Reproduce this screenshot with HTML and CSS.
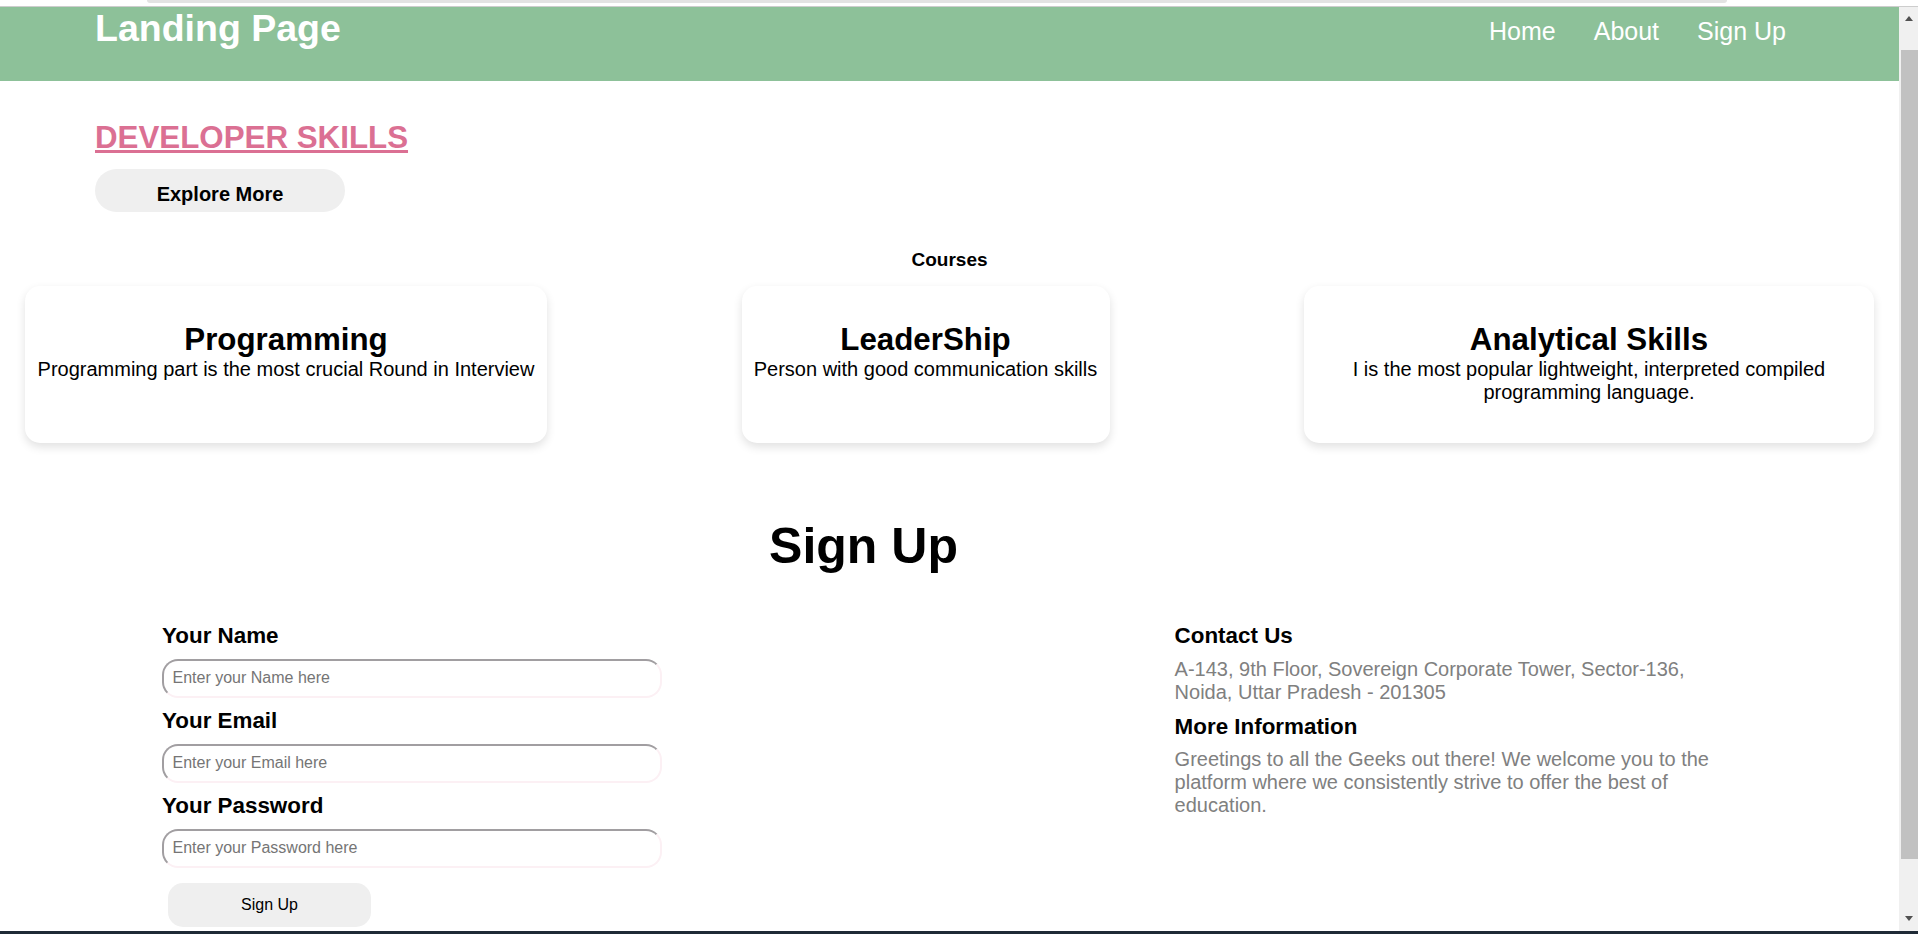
FILE: index.html
```html
<!DOCTYPE html>
<html lang="en">
<head>
<meta charset="utf-8">
<title>Landing Page</title>
<link rel="stylesheet" href="styles.css">
</head>
<body>
<div class="chrome-top"><div class="chrome-tab"></div></div>
<div class="window">
  <div class="page">
    <header class="site-header">
      <h1 class="logo">Landing Page</h1>
      <nav class="nav">
        <a href="#">Home</a>
        <a href="#">About</a>
        <a href="#">Sign Up</a>
      </nav>
    </header>

    <section class="hero">
      <h2 class="hero-title"><a href="#">DEVELOPER SKILLS</a></h2>
      <button class="explore-btn" type="button">Explore More</button>
    </section>

    <section class="courses">
      <h3 class="courses-title">Courses</h3>
      <div class="course-list">
        <div class="card card-programming">
          <h3 class="card-title">Programming</h3>
          <p class="card-text">Programming part is the most crucial Round in Interview</p>
        </div>
        <div class="card card-leadership">
          <h3 class="card-title">LeaderShip</h3>
          <p class="card-text">Person with good communication skills</p>
        </div>
        <div class="card card-analytical">
          <h3 class="card-title">Analytical Skills</h3>
          <p class="card-text">I is the most popular lightweight, interpreted compiled programming language.</p>
        </div>
      </div>
    </section>

    <section class="signup">
      <h2 class="signup-title">Sign Up</h2>
      <div class="signup-body">
        <form class="signup-form">
          <label class="field-label" for="name">Your Name</label>
          <input class="field-input" id="name" type="text" placeholder="Enter your Name here">
          <label class="field-label" for="email">Your Email</label>
          <input class="field-input" id="email" type="email" placeholder="Enter your Email here">
          <label class="field-label" for="password">Your Password</label>
          <input class="field-input" id="password" type="password" placeholder="Enter your Password here">
          <button class="submit-btn" type="button">Sign Up</button>
        </form>
        <div class="contact">
          <h3 class="contact-title">Contact Us</h3>
          <p class="contact-text">A-143, 9th Floor, Sovereign Corporate Tower, Sector-136, Noida, Uttar Pradesh - 201305</p>
          <h3 class="contact-title contact-title-next">More Information</h3>
          <p class="contact-text contact-text-last">Greetings to all the Geeks out there! We welcome you to the platform where we consistently strive to offer the best of education.</p>
        </div>
      </div>
    </section>
  </div>
  <div class="scrollbar">
    <div class="sb-up"><span class="tri-up"></span></div>
    <div class="sb-thumb"></div>
    <div class="sb-down"><span class="tri-down"></span></div>
  </div>
</div>
<div class="taskbar"></div>
</body>
</html>
```

FILE: styles.css
```css
* {
  box-sizing: border-box;
}

html,
body {
  margin: 0;
  height: 934px;
  overflow: hidden;
}

body {
  font-family: "Liberation Sans", Arial, sans-serif;
  background: #ffffff;
  color: #000000;
  display: flex;
  flex-direction: column;
}

/* browser chrome remnants */
.chrome-top {
  flex: none;
  height: 7px;
  background: #ffffff;
  border-bottom: 1px solid #cdcdcd;
}

.chrome-tab {
  margin-left: 147px;
  width: 1580px;
  height: 3px;
  background: #e3e3e3;
  border-radius: 0 0 8px 8px;
}

.window {
  flex: 1;
  min-height: 0;
  display: flex;
}

.page {
  flex: 1;
  min-width: 0;
  overflow: hidden;
}

.scrollbar {
  flex: none;
  width: 19px;
  background: #f0f0f0;
  display: flex;
  flex-direction: column;
  align-items: center;
}

.sb-up {
  height: 43px;
  padding-top: 9px;
}

.tri-up {
  display: block;
  width: 0;
  height: 0;
  border-left: 4.5px solid transparent;
  border-right: 4.5px solid transparent;
  border-bottom: 5px solid #505050;
}

.sb-thumb {
  align-self: flex-end;
  width: 17px;
  height: 809px;
  background: #c1c1c1;
}

.sb-down {
  flex: 1;
  display: flex;
  align-items: flex-end;
  padding-bottom: 10px;
}

.tri-down {
  display: block;
  width: 0;
  height: 0;
  border-left: 4.5px solid transparent;
  border-right: 4.5px solid transparent;
  border-top: 5px solid #505050;
}

.taskbar {
  flex: none;
  height: 3px;
  background: #1f2a36;
}

/* header */
.site-header {
  height: 74px;
  background: #8dc199;
  color: #ffffff;
  display: flex;
  justify-content: space-between;
  align-items: flex-start;
  padding: 0 113px 0 95px;
}

.logo {
  margin: 0;
  font-size: 37.5px;
  line-height: 42px;
  font-weight: bold;
}

.nav {
  display: flex;
  gap: 38px;
  padding-top: 9.5px;
}

.nav a {
  color: #ffffff;
  text-decoration: none;
  font-size: 25px;
  line-height: 28px;
}

/* hero */
.hero {
  padding-left: 95px;
}

.hero-title {
  margin: 37.5px 0 0;
  font-size: 31.3px;
  line-height: 37px;
  font-weight: bold;
}

.hero-title a {
  color: #db7093;
  text-decoration: underline;
}

.explore-btn {
  display: block;
  margin-top: 13.5px;
  width: 250px;
  height: 43px;
  border: none;
  border-radius: 22px;
  background: #efefef;
  color: #000000;
  font-family: "Liberation Sans", Arial, sans-serif;
  font-size: 20px;
  line-height: 23px;
  font-weight: bold;
  padding: 14px 0 6px;
}

/* courses */
.courses-title {
  margin: 37.4px 0 0;
  text-align: center;
  font-size: 19px;
  line-height: 22px;
  font-weight: bold;
}

.course-list {
  margin-top: 14.6px;
  padding: 0 25px;
  display: flex;
  justify-content: space-between;
  align-items: stretch;
}

.card {
  background: #ffffff;
  border-radius: 15px;
  box-shadow: 0 4px 10px rgba(0, 0, 0, 0.12);
  padding: 35px 8px 39px;
  text-align: center;
}

.card-programming {
  width: 522px;
}

.card-leadership {
  width: 368px;
}

.card-analytical {
  width: 570px;
}

.card-title {
  margin: 0;
  font-size: 31.3px;
  line-height: 37px;
  font-weight: bold;
}

.card-text {
  margin: 0;
  font-size: 20px;
  line-height: 23px;
}

/* sign up */
.signup {
  padding-right: 172px;
}

.signup-title {
  margin: 75.2px 0 0;
  text-align: center;
  font-size: 50px;
  line-height: 57px;
  font-weight: bold;
}

.signup-body {
  margin-top: 47.7px;
  padding-left: 162px;
  display: grid;
  grid-template-columns: 1012.6px 552px;
}

.signup-form {
  display: flex;
  flex-direction: column;
  align-items: flex-start;
}

.field-label {
  margin-top: 10px;
  font-size: 22.4px;
  line-height: 25px;
  font-weight: bold;
}

.field-label:first-child {
  margin-top: 0;
}

.field-input {
  margin-top: 11px;
  width: 500px;
  height: 39px;
  border: 2px solid;
  border-color: #a19ea1 #fcf0f4 #fcf0f4 #a19ea1;
  border-radius: 16px;
  padding: 0 8.5px;
  font-family: "Liberation Sans", Arial, sans-serif;
  font-size: 16px;
  background: #ffffff;
  outline: none;
}

.field-input::placeholder {
  color: #757575;
}

.submit-btn {
  margin: 15px 0 0 6px;
  width: 203px;
  height: 44px;
  border: none;
  border-radius: 15px;
  background: #efefef;
  color: #000000;
  font-family: "Liberation Sans", Arial, sans-serif;
  font-size: 16px;
}

.contact-title {
  margin: 0;
  font-size: 22.4px;
  line-height: 25px;
  font-weight: bold;
}

.contact-title-next {
  margin-top: 10px;
}

.contact-text {
  margin: 10px 0 0;
  font-size: 20px;
  line-height: 23px;
  color: #808080;
}

.contact-text-last {
  margin-top: 9px;
}
```
